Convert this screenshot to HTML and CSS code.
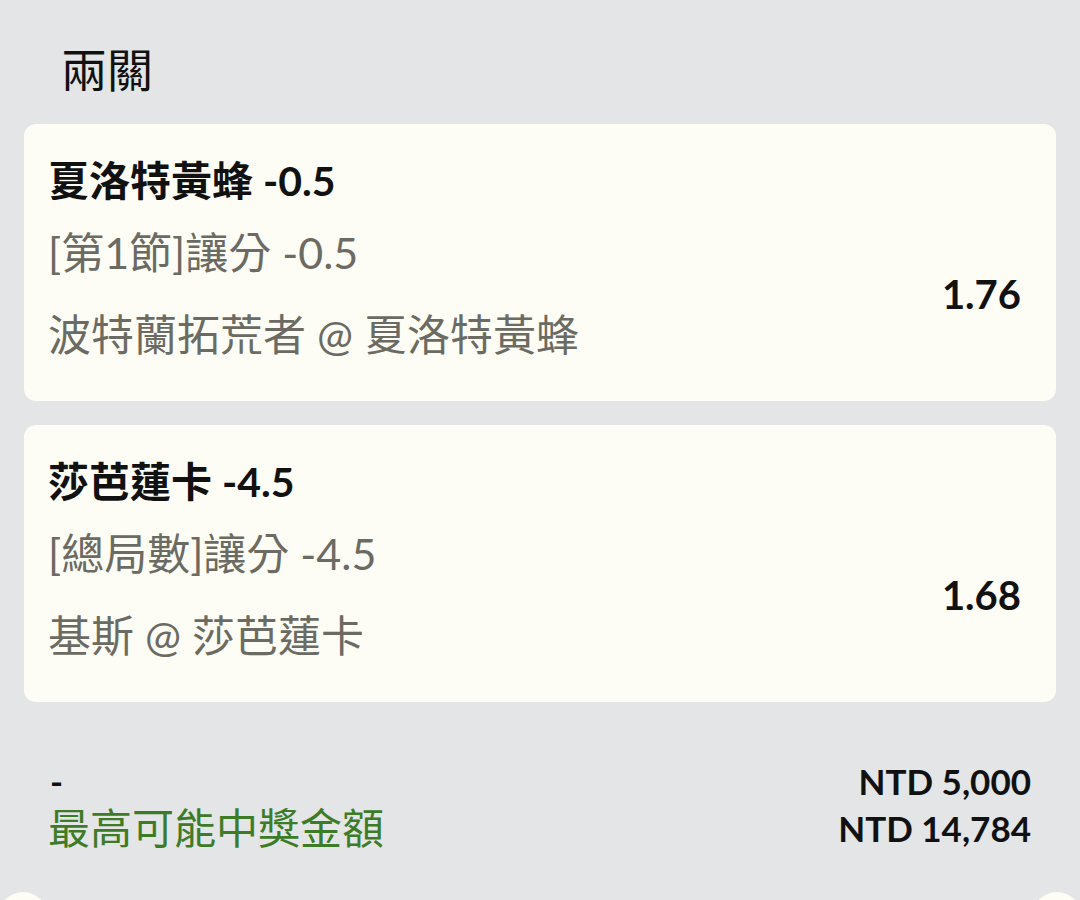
FILE: index.html
```html
<!DOCTYPE html>
<html lang="zh-Hant">
<head>
    <meta charset="UTF-8">
    <meta name="viewport" content="width=device-width, initial-scale=1.0">
    <title>兩關</title>
    <link rel="stylesheet" href="styles.css">
</head>
<body>
    <main class="slip">
        <h1 class="slip-title">兩關</h1>

        <!-- Legs -->
        <div class="leg">
            <div class="leg-pick">夏洛特黃蜂 -0.5</div>
            <div class="leg-body">
                <div class="leg-info">
                    <div class="leg-market">[第1節]讓分 -0.5</div>
                    <div class="leg-event">波特蘭拓荒者 @ 夏洛特黃蜂</div>
                </div>
                <div class="leg-odds">1.76</div>
            </div>
        </div>

        <div class="leg">
            <div class="leg-pick">莎芭蓮卡 -4.5</div>
            <div class="leg-body">
                <div class="leg-info">
                    <div class="leg-market">[總局數]讓分 -4.5</div>
                    <div class="leg-event">基斯 @ 莎芭蓮卡</div>
                </div>
                <div class="leg-odds">1.68</div>
            </div>
        </div>

        <!-- Totals -->
        <div class="totals">
            <div class="totals-labels">
                <div class="totals-stake">-</div>
                <div class="totals-win">最高可能中獎金額</div>
            </div>
            <div class="totals-values">
                <div>NTD 5,000</div>
                <div>NTD 14,784</div>
            </div>
        </div>

        <div class="notch notch-left"></div>
        <div class="notch notch-right"></div>
    </main>
</body>
</html>
```

FILE: styles.css
```css
html, body {
    margin: 0;
    padding: 0;
    height: 100%;
    overflow: hidden;
}
body {
    font-family: Lato, "Noto Sans CJK TC", sans-serif;
    background-color: #e3e5e7;
    color: #111;
}
.slip {
    position: relative;
    height: 900px;
    padding: 0 24px;
    box-sizing: border-box;
}
.slip-title {
    margin: 0 0 28px 0;
    padding: 38px 0 0 37px;
    font-size: 46px;
    line-height: 58px;
    font-weight: 400;
    font-family: "Noto Sans CJK TC", sans-serif;
}
.leg {
    background-color: #fdfdf5;
    border-radius: 12px;
    padding: 27px 35px 36px 24px;
    height: 277px;
    box-sizing: border-box;
    margin-bottom: 24px;
}
.leg-pick {
    font-size: 41px;
    font-weight: 700;
    line-height: 60px;
}
.leg-body {
    display: flex;
    align-items: center;
    justify-content: space-between;
    margin-top: 12px;
}
.leg-market, .leg-event {
    font-size: 43px;
    line-height: 60px;
    color: #6b6b63;
}
.leg-event {
    margin-top: 22px;
}
.leg-odds {
    font-size: 40px;
    font-weight: 700;
    line-height: 60px;
}
.totals {
    display: flex;
    justify-content: space-between;
    margin-top: 56px;
    padding: 0 25px 0 24px;
    line-height: 47px;
}
.totals-stake {
    font-size: 35px;
    font-weight: 700;
    padding-left: 2px;
}
.totals-win {
    font-size: 42px;
    color: #3e7b27;
}
.totals-values {
    text-align: right;
    font-size: 35px;
    font-weight: 700;
}
.notch {
    position: absolute;
    top: 892px;
    width: 50px;
    height: 50px;
    border-radius: 50%;
    background-color: #fdfdf5;
}
.notch-left {
    left: -2px;
}
.notch-right {
    right: -2px;
}
```
